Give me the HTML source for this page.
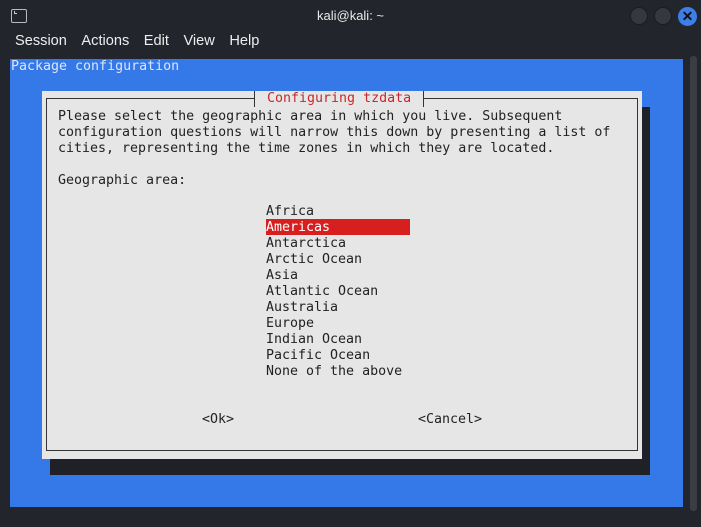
<!DOCTYPE html>
<html><head><meta charset="utf-8"><style>
*{margin:0;padding:0;box-sizing:border-box}
body{width:701px;height:527px;background:#22252c;position:relative;overflow:hidden;font-family:"Liberation Sans",sans-serif}
.a{position:absolute}
.m{font-family:"DejaVu Sans Mono","Liberation Mono",monospace;font-size:13.3px;line-height:16px;white-space:pre;color:#222}
.menu span{margin-right:14.5px}
</style></head><body>
<div class="a" style="left:11px;top:9px;width:16px;height:14px;border:1.5px solid #bbb;border-radius:2px"></div>
<div class="a" style="left:14px;top:11px;width:3px;height:3px;border-left:1px solid #ccc;border-bottom:1px solid #ccc"></div>
<div class="a" style="left:0;top:8px;width:701px;text-align:center;color:#e8e8e8;font-size:13px">kali@kali: ~</div>
<div class="a" style="left:630px;top:7px;width:18px;height:18px;border-radius:50%;background:#35383f;border:1px solid #1a1c20"></div>
<div class="a" style="left:654px;top:7px;width:18px;height:18px;border-radius:50%;background:#35383f;border:1px solid #1a1c20"></div>
<div class="a" style="left:678px;top:7px;width:19px;height:19px;border-radius:50%;background:#3d7ee8;color:#111;font-size:14px;font-weight:bold;text-align:center;line-height:19px">✕</div>
<div class="a menu" style="left:15px;top:33px;color:#eee;font-size:14.6px"><span>Session</span><span>Actions</span><span>Edit</span><span>View</span><span>Help</span></div>
<div class="a" style="left:10px;top:59px;width:673px;height:448px;background:#3579e8"></div>
<div class="a" style="left:690px;top:56px;width:7px;height:455px;background:#3a3d44;border-radius:3px"></div>
<div class="a m" style="left:11px;top:59px;color:#dde6f5">Package configuration</div>
<div class="a" style="left:50px;top:107px;width:600px;height:368px;background:#1f2127"></div>
<div class="a" style="left:42px;top:91px;width:600px;height:368px;background:#e6e6e6"></div>
<div class="a" style="left:46px;top:98px;width:592px;height:353px;border:1px solid #333"></div>
<div class="a m" style="left:254px;top:91px;background:#e6e6e6;color:#c8282a;padding:0 4px;border-left:1px solid #333;border-right:1px solid #333"> Configuring tzdata </div>
<div class="a m" style="left:58px;top:109px">Please select the geographic area in which you live. Subsequent
configuration questions will narrow this down by presenting a list of
cities, representing the time zones in which they are located.

Geographic area:</div>
<div class="a" style="left:266px;top:219px;width:144px;height:16px;background:#d71f1f"></div>
<div class="a m" style="left:266px;top:204px">Africa
<span style="color:#fff">Americas</span>
Antarctica
Arctic Ocean
Asia
Atlantic Ocean
Australia
Europe
Indian Ocean
Pacific Ocean
None of the above</div>
<div class="a m" style="left:202px;top:412px">&lt;Ok&gt;</div>
<div class="a m" style="left:418px;top:412px">&lt;Cancel&gt;</div>
</body></html>
